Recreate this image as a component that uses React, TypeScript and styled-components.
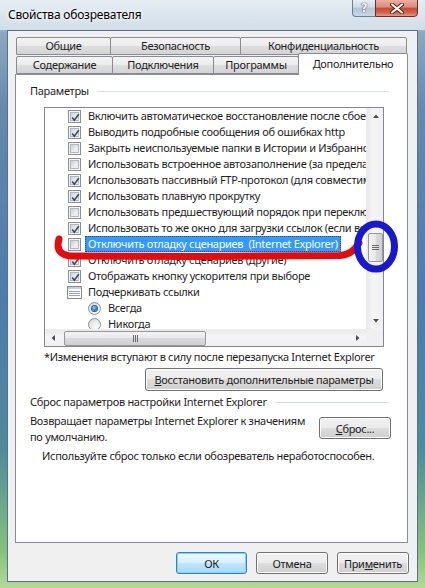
import React from "react"
import styled, { createGlobalStyle } from "styled-components"

type Row = {
  kind: "check" | "radio" | "group"
  text: string
  on?: boolean
  selected?: boolean
}

const rows: Row[] = [
  { kind: "check", on: true, text: "Включить автоматическое восстановление после сбоев" },
  { kind: "check", on: true, text: "Выводить подробные сообщения об ошибках http" },
  { kind: "check", on: false, text: "Закрыть неиспользуемые папки в Истории и Избранном" },
  { kind: "check", on: false, text: "Использовать встроенное автозаполнение (за пределами Internet Explorer)" },
  { kind: "check", on: true, text: "Использовать пассивный FTP-протокол (для совместимости с брандмауэрами)" },
  { kind: "check", on: true, text: "Использовать плавную прокрутку" },
  { kind: "check", on: false, text: "Использовать предшествующий порядок при переключении вкладок" },
  { kind: "check", on: true, text: "Использовать то же окно для загрузки ссылок (если возможно)" },
  { kind: "check", on: false, text: "Отключить отладку сценариев\u00a0 (Internet Explorer)", selected: true },
  { kind: "check", on: true, text: "Отключить отладку сценариев (другие)" },
  { kind: "check", on: true, text: "Отображать кнопку ускорителя при выборе" },
  { kind: "group", text: "Подчеркивать ссылки" },
  { kind: "radio", on: true, text: "Всегда" },
  { kind: "radio", on: false, text: "Никогда" },
]

const GlobalStyle = createGlobalStyle`
  html, body {
    margin: 0;
    padding: 0;
  }
  body {
    font-family: "Noto Sans", "Open Sans", sans-serif;
    font-size: 11px;
    letter-spacing: -0.3px;
    color: #1e1e1e;
  }
`

const Window = styled.div`
  position: relative;
  width: 425px;
  height: 588px;
  box-sizing: border-box;
  display: flex;
  flex-direction: column;
  padding: 0 7px 6px 7px;
  overflow: hidden;
  background: linear-gradient(
    180deg,
    #e3eaf1 0px,
    #cfdae5 24px,
    #8ea7c0 32px,
    #6688ab 110px,
    #4d7cab 300px,
    #4f8b9a 450px,
    #86c07e 550px,
    #b2da96 588px
  );
`

const TitleBar = styled.div`
  height: 30px;
  display: flex;
  align-items: flex-start;
  margin: 0 -7px;
  padding-left: 8px;
  background: linear-gradient(180deg, #e6edf3, #d2dde8);
`

const Title = styled.div`
  padding-top: 7px;
  line-height: 16px;
  font-size: 12px;
  letter-spacing: -0.2px;
  color: #000;
  text-shadow: 0 0 6px #fff, 0 0 3px #fff;
`

const CaptionButtons = styled.div`
  display: flex;
  margin-left: auto;
  margin-right: 7px;
  margin-top: -1px;
`

const HelpButton = styled.div`
  width: 23px;
  height: 18px;
  box-sizing: border-box;
  border: 1px solid #6a7f96;
  border-right: none;
  border-radius: 0 0 0 4px;
  background: linear-gradient(180deg, #e6edf4 0%, #cfdbe7 45%, #b4c5d7 50%, #c9d8e6 100%);
  display: flex;
  align-items: center;
  justify-content: center;
  color: #f6f8fb;
  font-family: "DejaVu Sans", sans-serif;
  font-weight: bold;
  font-size: 12px;
  text-shadow: 0 0 1px #2c3d52, 0 0 1px #2c3d52;
`

const CloseButton = styled.div`
  width: 43px;
  height: 18px;
  box-sizing: border-box;
  border: 1px solid #6b2d24;
  border-radius: 0 0 4px 0;
  background: linear-gradient(180deg, #eab0a4 0%, #dc8a77 45%, #c54a33 50%, #d06650 80%, #e39c82 100%);
  display: flex;
  align-items: center;
  justify-content: center;
`

const Client = styled.div`
  flex: 1;
  display: flex;
  flex-direction: column;
  background: #f0f0f0;
  border: 1px solid #56728f;
  padding: 7px 9px 0 7px;
`

const TabRow = styled.div<{ $h: number }>`
  display: flex;
  align-items: flex-end;
  height: ${(p) => p.$h}px;
  padding-left: 1px;
`

const Tab = styled.div<{ $w: number; $active?: boolean }>`
  position: relative;
  z-index: ${(p) => (p.$active ? 2 : 1)};
  box-sizing: border-box;
  width: ${(p) => p.$w}px;
  height: ${(p) => (p.$active ? 22 : 18)}px;
  margin-right: -1px;
  margin-bottom: ${(p) => (p.$active ? -1 : 0)}px;
  border: 1px solid #898c95;
  border-bottom: ${(p) => (p.$active ? "none" : "1px solid #898c95")};
  border-radius: 2px 2px 0 0;
  background: ${(p) =>
    p.$active
      ? "#fff"
      : "linear-gradient(180deg, #f4f4f4 0%, #ececec 50%, #dedede 50%, #d4d4d4 100%)"};
  display: flex;
  align-items: ${(p) => (p.$active ? "flex-start" : "center")};
  padding-top: ${(p) => (p.$active ? 3 : 0)}px;
  justify-content: center;
  white-space: nowrap;
  line-height: 14px;
`

const TabPanel = styled.div`
  height: 469px;
  box-sizing: border-box;
  background: #fff;
  border: 1px solid #898c95;
  padding: 8px 16px 0 14px;
  display: flex;
  flex-direction: column;
`

const GroupHeader = styled.div<{ $top: number }>`
  display: flex;
  align-items: center;
  margin-top: ${(p) => p.$top}px;
  margin-right: 2px;
  line-height: 16px;
  white-space: nowrap;
`

const GroupLine = styled.div`
  flex: 1;
  height: 1px;
  margin-left: 8px;
  background: #d5dfe5;
`

const Section = styled.div`
  width: 340px;
  margin-left: 14px;
  display: flex;
  flex-direction: column;
`

const ListBox = styled.div`
  margin-top: 8px;
  width: 340px;
  height: 240px;
  box-sizing: border-box;
  border: 1px solid #828790;
  display: grid;
  grid-template-columns: 1fr 17px;
  grid-template-rows: 1fr 17px;
`

const Viewport = styled.div`
  overflow: hidden;
  background: #fff;
`

const ListRow = styled.div<{ $indent: number }>`
  height: 16px;
  display: flex;
  align-items: center;
  padding-left: ${(p) => p.$indent}px;
  white-space: nowrap;
`

const RowLabel = styled.span<{ $selected?: boolean }>`
  margin-left: 4px;
  padding: 0 2px;
  line-height: 14px;
  border: 1px dotted ${(p) => (p.$selected ? "#1f4f8a" : "transparent")};
  margin-top: -1px;
  background: ${(p) => (p.$selected ? "#3399ff" : "transparent")};
  color: ${(p) => (p.$selected ? "#fff" : "#1e1e1e")};
`

const CheckBox = styled.span`
  width: 13px;
  height: 13px;
  flex: none;
  box-sizing: border-box;
  border: 1px solid #8e8f8f;
  background: #f4f4f4;
  padding: 1px;
  display: flex;
`

const CheckInner = styled.span`
  flex: 1;
  border: 1px solid #b3b7bd;
  background: linear-gradient(135deg, #cdd1d7 0%, #e8eaec 55%, #f7f7f7 100%);
  position: relative;
`

const Radio = styled.span`
  width: 13px;
  height: 13px;
  flex: none;
  box-sizing: border-box;
  border: 1px solid #8e8f8f;
  border-radius: 50%;
  background: radial-gradient(circle at 65% 70%, #fdfdfd 0%, #e2e4e7 60%, #c9cdd2 100%);
  display: flex;
  align-items: center;
  justify-content: center;
`

const RadioDot = styled.span`
  width: 5px;
  height: 5px;
  border-radius: 50%;
  background: radial-gradient(circle at 40% 35%, #8fd0f4 0%, #2c7ec4 55%, #17457a 100%);
  box-shadow: 0 0 0 1px #245c96;
`

const VScroll = styled.div`
  display: flex;
  flex-direction: column;
  background: linear-gradient(90deg, #e9e9e9, #f5f5f5 40%, #f0f0f0);
  border-left: 1px solid #ececec;
`

const HScroll = styled.div`
  display: flex;
  align-items: center;
  background: linear-gradient(180deg, #e9e9e9, #f5f5f5 40%, #f0f0f0);
  border-top: 1px solid #ececec;
`

const Corner = styled.div`
  background: #f0f0f0;
`

const Arrow = styled.div`
  width: 17px;
  height: 17px;
  flex: none;
  display: flex;
  align-items: center;
  justify-content: center;
`

const Track = styled.div`
  flex: 1;
  display: flex;
`

const Thumb = styled.div<{ $vertical?: boolean; $offset: number; $size: number }>`
  box-sizing: border-box;
  border: 1px solid #979797;
  border-radius: 2px;
  display: flex;
  align-items: center;
  justify-content: center;
  ${(p) =>
    p.$vertical
      ? `width: 15px; margin-left: 1px; height: ${p.$size}px; margin-top: ${p.$offset}px;
         background: linear-gradient(90deg, #f3f3f3, #e8e8e8 50%, #d9d9d9 50%, #d0d0d0);`
      : `height: 15px; width: ${p.$size}px; margin-left: ${p.$offset}px;
         background: linear-gradient(180deg, #f3f3f3, #e8e8e8 50%, #d9d9d9 50%, #d0d0d0);`}
`

const Note = styled.div<{ $left: number; $top: number }>`
  margin-left: ${(p) => p.$left}px;
  margin-top: ${(p) => p.$top}px;
  line-height: 16px;
  white-space: nowrap;
`

const Button = styled.div<{ $w: number; $h?: number; $default?: boolean }>`
  width: ${(p) => p.$w}px;
  height: ${(p) => p.$h ?? 23}px;
  flex: none;
  box-sizing: border-box;
  border: 1px solid ${(p) => (p.$default ? "#3c7fb1" : "#707070")};
  border-radius: 3px;
  background: ${(p) =>
    p.$default
      ? "linear-gradient(180deg, #eaf6fd 0%, #d9f0fc 50%, #bee6fd 50%, #a7d9f5 100%)"
      : "linear-gradient(180deg, #f2f2f2 0%, #ebebeb 50%, #dddddd 50%, #cfcfcf 100%)"};
  box-shadow: inset 0 0 0 1px ${(p) => (p.$default ? "#7fd5f5" : "#fcfcfc")};
  display: flex;
  align-items: center;
  justify-content: center;
  white-space: nowrap;
  color: #1e1e1e;
`

const RestoreButton = styled(Button)`
  margin-top: 3px;
  margin-left: auto;
  margin-right: 1px;
`

const ResetRow = styled.div`
  display: flex;
  justify-content: space-between;
  align-items: flex-start;
  margin-top: 3px;
`

const ResetText = styled.div`
  line-height: 16px;
  white-space: nowrap;
`

const ResetButton = styled(Button)`
  margin-top: 4px;
`

const ButtonRow = styled.div`
  display: flex;
  justify-content: flex-end;
  gap: 9px;
  margin-top: 9px;
  margin-right: -1px;
`

const Annotations = styled.svg`
  position: absolute;
  left: 0;
  top: 0;
  pointer-events: none;
`

const Tick = () => (
  <svg width="11" height="11" viewBox="0 0 11 11" style={{ position: "absolute", left: -1, top: -1 }}>
    <path d="M2.2 5.6 L4.4 8.2 L8.8 2.2" fill="none" stroke="#3b4c6b" strokeWidth="1.7" />
  </svg>
)

const Grip = ({ vertical }: { vertical?: boolean }) =>
  vertical ? (
    <svg width="7" height="7" viewBox="0 0 7 7">
      <path d="M0 1.5h7M0 3.5h7M0 5.5h7" stroke="#6b6b6b" strokeWidth="1" />
    </svg>
  ) : (
    <svg width="7" height="7" viewBox="0 0 7 7">
      <path d="M1.5 0v7M3.5 0v7M5.5 0v7" stroke="#6b6b6b" strokeWidth="1" />
    </svg>
  )

const Triangle = ({ dir }: { dir: "up" | "down" | "left" | "right" }) => {
  const d = {
    up: "M1 5 L4 1.5 L7 5 Z",
    down: "M1 2 L4 5.5 L7 2 Z",
    left: "M5 1 L1.5 4 L5 7 Z",
    right: "M2 1 L5.5 4 L2 7 Z",
  }[dir]
  return (
    <svg width="8" height="8" viewBox="0 0 8 8">
      <path d={d} fill="#4d4d4d" />
    </svg>
  )
}

const UnderlineIcon = () => (
  <svg width="15" height="13" viewBox="0 0 15 13" style={{ flex: "none" }}>
    <rect x="0.5" y="0.5" width="14" height="12" fill="#fafafa" stroke="#8a8a8a" />
    <rect x="1" y="1" width="13" height="2" fill="#c8ced6" />
    <path d="M2 5.5h11M2 7.5h11M2 9.5h11" stroke="#9aa0a8" strokeWidth="1" />
  </svg>
)

const OptionRow = ({ row }: { row: Row }) => {
  if (row.kind === "radio") {
    return (
      <ListRow $indent={43}>
        <Radio>{row.on && <RadioDot />}</Radio>
        <RowLabel>{row.text}</RowLabel>
      </ListRow>
    )
  }
  if (row.kind === "group") {
    return (
      <ListRow $indent={22}>
        <UnderlineIcon />
        <RowLabel style={{ marginLeft: 3 }}>{row.text}</RowLabel>
      </ListRow>
    )
  }
  return (
    <ListRow $indent={23}>
      <CheckBox>
        <CheckInner>{row.on && <Tick />}</CheckInner>
      </CheckBox>
      <RowLabel $selected={row.selected}>{row.text}</RowLabel>
    </ListRow>
  )
}

export default function App() {
  return (
    <>
      <GlobalStyle />
      <Window>
        <TitleBar>
          <Title>Свойства обозревателя</Title>
          <CaptionButtons>
            <HelpButton>?</HelpButton>
            <CloseButton>
              <svg width="14" height="11" viewBox="0 0 14 11">
                <path d="M2 1.5 L12 9.5 M12 1.5 L2 9.5" stroke="#5a1a12" strokeWidth="4" strokeLinecap="round" />
                <path d="M2 1.5 L12 9.5 M12 1.5 L2 9.5" stroke="#fff" strokeWidth="2.2" strokeLinecap="round" />
              </svg>
            </CloseButton>
          </CaptionButtons>
        </TitleBar>

        <Client>
          <TabRow $h={17}>
            <Tab $w={95}>Общие</Tab>
            <Tab $w={131}>Безопасность</Tab>
            <Tab $w={167}>Конфиденциальность</Tab>
          </TabRow>
          <TabRow $h={19}>
            <Tab $w={97}>Содержание</Tab>
            <Tab $w={102}>Подключения</Tab>
            <Tab $w={86}>Программы</Tab>
            <Tab $w={110} $active>
              Дополнительно
            </Tab>
          </TabRow>

          <TabPanel>
            <GroupHeader $top={0}>
              Параметры
              <GroupLine />
            </GroupHeader>

            <Section>
              <ListBox>
                <Viewport>
                  {rows.map((row, i) => (
                    <OptionRow key={i} row={row} />
                  ))}
                </Viewport>
                <VScroll>
                  <Arrow>
                    <Triangle dir="up" />
                  </Arrow>
                  <Track>
                    <Thumb $vertical $offset={108} $size={29}>
                      <Grip vertical />
                    </Thumb>
                  </Track>
                  <Arrow>
                    <Triangle dir="down" />
                  </Arrow>
                </VScroll>
                <HScroll>
                  <Arrow>
                    <Triangle dir="left" />
                  </Arrow>
                  <Thumb $offset={2} $size={142}>
                    <Grip />
                  </Thumb>
                  <Arrow style={{ marginLeft: "auto" }}>
                    <Triangle dir="right" />
                  </Arrow>
                </HScroll>
                <Corner />
              </ListBox>

              <Note $left={0} $top={2}>
                *Изменения вступают в силу после перезапуска Internet Explorer
              </Note>

              <RestoreButton $w={238}>
                <span>
                  <u>В</u>осстановить дополнительные параметры
                </span>
              </RestoreButton>
            </Section>

            <GroupHeader $top={3}>
              Сброс параметров настройки Internet Explorer
              <GroupLine />
            </GroupHeader>

            <ResetRow>
              <ResetText>
                Возвращает параметры Internet Explorer к значениям
                <br />
                по умолчанию.
              </ResetText>
              <ResetButton $w={72} $h={22}>
                <span>
                  <u>С</u>брос...
                </span>
              </ResetButton>
            </ResetRow>

            <Note $left={12} $top={3}>
              Используйте сброс только если обозреватель неработоспособен.
            </Note>
          </TabPanel>

          <ButtonRow>
            <Button $w={71} $h={22} $default>
              ОК
            </Button>
            <Button $w={72} $h={22}>
              Отмена
            </Button>
            <Button $w={72} $h={22}>
              <span>
                При<u>м</u>енить
              </span>
            </Button>
          </ButtonRow>
        </Client>

        <Annotations width="425" height="588" viewBox="0 0 425 588">
          <path
            d="M59 239 C56 250 60 256 74 256 L 200 256.5 L 340 255.5 C 350 255 355 250 359 243"
            fill="none"
            stroke="#e30b0b"
            strokeWidth="7"
            strokeLinecap="round"
            strokeLinejoin="round"
          />
          <ellipse cx="376" cy="246.5" rx="18.5" ry="22.5" fill="none" stroke="#1818cf" strokeWidth="7" />
        </Annotations>
      </Window>
    </>
  )
}
